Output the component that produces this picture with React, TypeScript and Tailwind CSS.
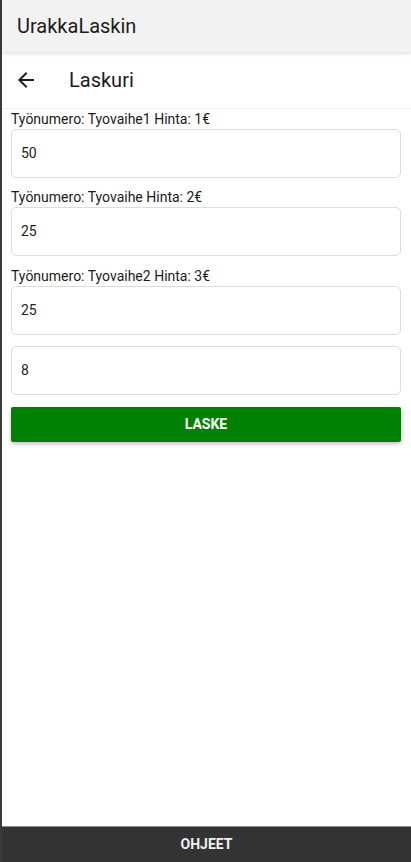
import React from "react";

const font = { fontFamily: "Roboto, 'Noto Sans', sans-serif" };

function Field({ label, value }: { label?: string; value: string }) {
  return (
    <div className="flex flex-col">
      {label && (
        <div className="h-[19px] text-[14px] leading-[19px] text-[#1a1a1a]">{label}</div>
      )}
      <div className="flex h-[49px] items-center rounded-[5px] border border-[#dcdcdc] bg-white pl-[9px] text-[14px] text-[#222]">
        {value}
      </div>
    </div>
  );
}

export default function App() {
  return (
    <div className="flex h-[862px] w-[411px] overflow-hidden bg-white" style={font}>
      <div className="w-[2px] shrink-0 bg-[#3a3a3a]" />
      <div className="flex min-w-0 flex-1 flex-col">
        <div className="relative z-10 flex h-[52px] shrink-0 items-center bg-[#f2f2f2] pl-[15px] shadow-[0_2px_4px_rgba(0,0,0,0.12)]">
          <span className="text-[20px] font-normal text-[#1c1c1c]">UrakkaLaskin</span>
        </div>
        <div className="flex h-[57px] shrink-0 items-center border-b border-[#f0f0f0] bg-white">
          <svg className="ml-[12px]" width="24" height="24" viewBox="0 0 24 24" fill="#1c1c1c">
            <path d="M20 11H7.83l5.59-5.59L12 4l-8 8 8 8 1.41-1.41L7.83 13H20v-2z" />
          </svg>
          <span className="ml-[31px] text-[20px] font-normal text-[#1c1c1c]">Laskuri</span>
        </div>
        <div className="flex flex-1 flex-col pl-[9px] pr-[10px]">
          <div className="mt-[1px]">
            <Field label="Työnumero: Tyovaihe1 Hinta: 1€" value="50" />
          </div>
          <div className="mt-[10px]">
            <Field label="Työnumero: Tyovaihe Hinta: 2€" value="25" />
          </div>
          <div className="mt-[11px]">
            <Field label="Työnumero: Tyovaihe2 Hinta: 3€" value="25" />
          </div>
          <div className="mt-[11px]">
            <Field value="8" />
          </div>
          <button className="mt-[12px] flex h-[35px] items-center justify-center rounded-[2px] bg-[#008000] text-[14px] font-bold text-white shadow-[0_2px_4px_rgba(0,0,0,0.25)]">
            LASKE
          </button>
        </div>
        <div className="flex h-[36px] shrink-0 items-center justify-center border-t border-[#8a8a8a] bg-[#333333] text-[14px] font-bold text-[#f0f0f0]">
          OHJEET
        </div>
      </div>
    </div>
  );
}
